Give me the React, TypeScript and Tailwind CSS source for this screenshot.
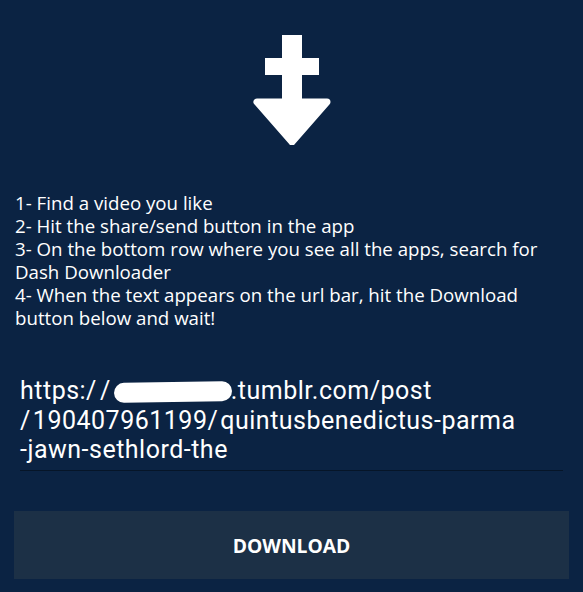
import React from 'react';

const steps = [
  '1- Find a video you like',
  '2- Hit the share/send button in the app',
  '3- On the bottom row where you see all the apps, search for Dash Downloader',
  '4- When the text appears on the url bar, hit the Download button below and wait!',
];

function DownloadIcon() {
  return (
    <svg width="78" height="110" viewBox="0 0 78 110" fill="#ffffff">
      <rect x="29" y="0" width="20" height="72" />
      <rect x="12" y="23" width="54" height="17" />
      <path
        d="M4 67 L74 67 L39 107 Z"
        stroke="#ffffff"
        strokeWidth="7"
        strokeLinejoin="round"
      />
    </svg>
  );
}

export default function App() {
  return (
    <div
      className="w-[583px] h-[592px] bg-[#0b2343] text-white overflow-hidden flex flex-col"
      style={{ fontFamily: '"Open Sans", Roboto, sans-serif' }}
    >
      {/* Icono */}
      <div className="flex justify-center pt-[35px]">
        <DownloadIcon />
      </div>

      {/* Instrucciones */}
      <div className="mt-[46px] pl-[15px] pr-[30px] text-[18.7px] leading-[23px]">
        {steps.map((s) => (
          <p key={s}>{s}</p>
        ))}
      </div>

      {/* Campo URL */}
      <div
        className="mt-[47px] mx-[20px] text-[25px] leading-[29.5px] tracking-[0.5px]"
        style={{ fontFamily: 'Roboto, sans-serif' }}
      >
        <p className="whitespace-nowrap">
          https:/<span className="ml-[3px]">/</span>
          <span className="inline-block align-middle w-[118px] h-[20px] bg-white rounded-full -rotate-1 ml-[3px] -mr-[1px]"></span>
          .tumblr.com/post
        </p>
        <p className="whitespace-nowrap">
          /<span className="ml-[2px]">190407961199</span>/<span className="ml-[2px]">quintusbenedictus-parma</span>
        </p>
        <p className="whitespace-nowrap">-jawn-sethlord-the</p>
        <div className="mt-[5px] h-px bg-[#061528]"></div>
      </div>

      {/* Botón */}
      <button className="mt-[40px] mx-[14px] h-[68px] bg-[#1c3046] text-white text-[19.3px] font-bold pt-[4px]">
        DOWNLOAD
      </button>
    </div>
  );
}
